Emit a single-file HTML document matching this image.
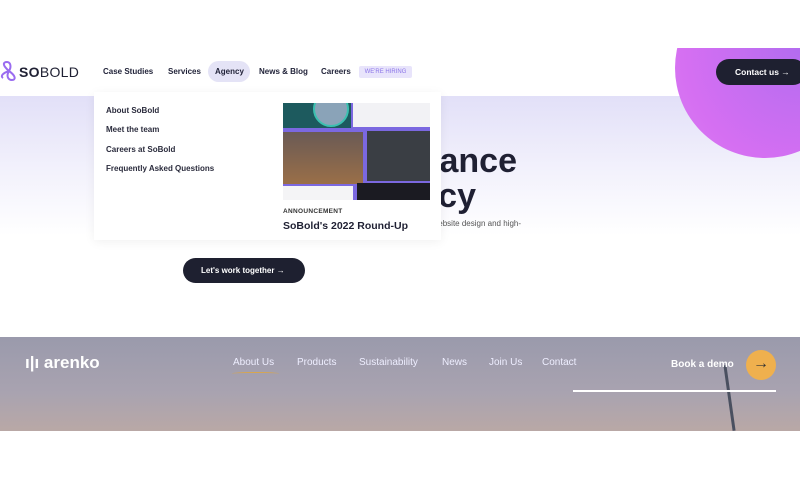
<!DOCTYPE html>
<html><head><meta charset="utf-8"><style>
*{margin:0;padding:0;box-sizing:border-box}
body{width:800px;height:480px;overflow:hidden;background:#fff;font-family:"Liberation Sans",sans-serif;position:relative}
.abs{position:absolute}
.hero{left:0;top:96px;width:800px;height:140px;background:linear-gradient(#e2e0f8,#f3f2fc 55%,#fff)}
.circ{left:675px;top:-22px;width:180px;height:180px;border-radius:50%;background:radial-gradient(circle at 70% 40%,#b36cf0,#d56ff2 70%,#d97df3);clip-path:inset(70px 0 0 0)}
.nav{top:67px;font-size:8px;font-weight:bold;color:#22243a}
.drop{left:94px;top:92px;width:347px;height:148px;background:#fff;box-shadow:0 2px 10px rgba(0,0,0,.06)}
.dl{left:106px;font-size:8px;font-weight:bold;color:#2a2b3c}
.h{position:absolute;right:283px;font-size:34px;font-weight:bold;color:#1f2033;white-space:nowrap;text-align:right}
.foot{left:0;top:337px;width:800px;height:94px;background:linear-gradient(180deg,#9a9aac,#a9a3b0 60%,#b9a8a6)}
.fn{top:357px;font-size:10px;color:#eef}
</style></head><body>
<div class="abs hero"></div>
<div class="abs circ"></div>
<svg class="abs" style="left:0;top:61px" width="18" height="20" viewBox="0 0 18 20"><path d="M9 10 C2 4 3 1 7 1 C10 1 12 5 9 10 C6 15 8 19 12 19 C16 19 16 15 9 10 M9 10 C3 12 0 15 3 17" stroke="#9a6cf0" stroke-width="2" fill="none"/></svg>
<div class="abs" style="left:19px;top:64px;font-size:14px;color:#1f2033;letter-spacing:.3px"><b>SO</b>BOLD</div>
<div class="abs nav" style="left:103px">Case Studies</div>
<div class="abs nav" style="left:168px">Services</div>
<div class="abs" style="left:208px;top:61px;width:42px;height:21px;border-radius:11px;background:#e4e3f6"></div>
<div class="abs nav" style="left:215px">Agency</div>
<div class="abs nav" style="left:259px">News &amp; Blog</div>
<div class="abs nav" style="left:321px">Careers</div>
<div class="abs" style="left:359px;top:66px;width:53px;height:12px;background:#e8e4fb;border-radius:2px;font-size:6px;color:#8b74e8;text-align:center;line-height:12px">WE'RE HIRING</div>
<div class="abs" style="left:716px;top:59px;width:90px;height:26px;border-radius:13px;background:#1e2030;color:#fff;font-size:8.5px;font-weight:bold;line-height:26px;padding-left:19px">Contact us →</div>
<div class="h" style="top:142px">Website performance</div>
<div class="h" style="top:177px;right:324px">agency</div>
<div class="abs" style="right:279px;top:219px;font-size:8px;color:#555;white-space:nowrap">We help businesses grow with website design and high-</div>
<div class="abs" style="left:183px;top:258px;width:122px;height:25px;border-radius:13px;background:#1e2030;color:#fff;font-size:8px;font-weight:bold;line-height:25px;padding-left:18px">Let's work together →</div>
<div class="abs drop"></div>
<div class="abs dl" style="top:106px">About SoBold</div>
<div class="abs dl" style="top:125px">Meet the team</div>
<div class="abs dl" style="top:145px">Careers at SoBold</div>
<div class="abs dl" style="top:164px">Frequently Asked Questions</div>
<div class="abs" style="left:283px;top:103px;width:147px;height:97px;background:#7b68e0;overflow:hidden">
<div class="abs" style="left:0;top:0;width:68px;height:25px;background:#1d5a5e"></div>
<div class="abs" style="left:30px;top:-12px;width:36px;height:36px;border-radius:50%;background:#8aa3b8;border:2px solid #3cc0b0"></div>
<div class="abs" style="left:70px;top:0;width:77px;height:24px;background:#f2f2f5"></div>
<div class="abs" style="left:0;top:29px;width:80px;height:52px;background:linear-gradient(#6a5a55,#9a6f48)"></div>
<div class="abs" style="left:84px;top:28px;width:63px;height:50px;background:#3a3e44"></div>
<div class="abs" style="left:0;top:83px;width:70px;height:14px;background:#f4f4f6"></div>
<div class="abs" style="left:74px;top:80px;width:73px;height:17px;background:#1b1b22"></div>
</div>
<div class="abs" style="left:283px;top:208px;font-size:6.5px;font-weight:bold;color:#333;letter-spacing:.3px">ANNOUNCEMENT</div>
<div class="abs" style="left:283px;top:220px;font-size:10.5px;font-weight:bold;color:#1f2033">SoBold's 2022 Round-Up</div>
<div class="abs foot"></div>
<div class="abs" style="left:25px;top:353px;font-size:17px;font-weight:bold;color:#fff">ı|ı arenko</div>
<div class="abs fn" style="left:233px">About Us</div>
<div class="abs" style="left:232px;top:372px;width:47px;height:3px;border-top:1.5px solid #d9a64c;border-radius:50%"></div>
<div class="abs fn" style="left:297px">Products</div>
<div class="abs fn" style="left:359px">Sustainability</div>
<div class="abs fn" style="left:442px">News</div>
<div class="abs fn" style="left:489px">Join Us</div>
<div class="abs fn" style="left:542px">Contact</div>
<div class="abs" style="left:728px;top:365px;width:3px;height:66px;background:#4a5060;transform:rotate(-8deg)"></div>
<div class="abs" style="left:671px;top:359px;font-size:10px;font-weight:bold;color:#fff">Book a demo</div>
<div class="abs" style="left:746px;top:350px;width:30px;height:30px;border-radius:50%;background:#efb04e;color:#333;font-size:16px;text-align:center;line-height:28px">→</div>
<div class="abs" style="left:573px;top:390px;width:203px;height:2px;background:#fff"></div>
</body></html>
